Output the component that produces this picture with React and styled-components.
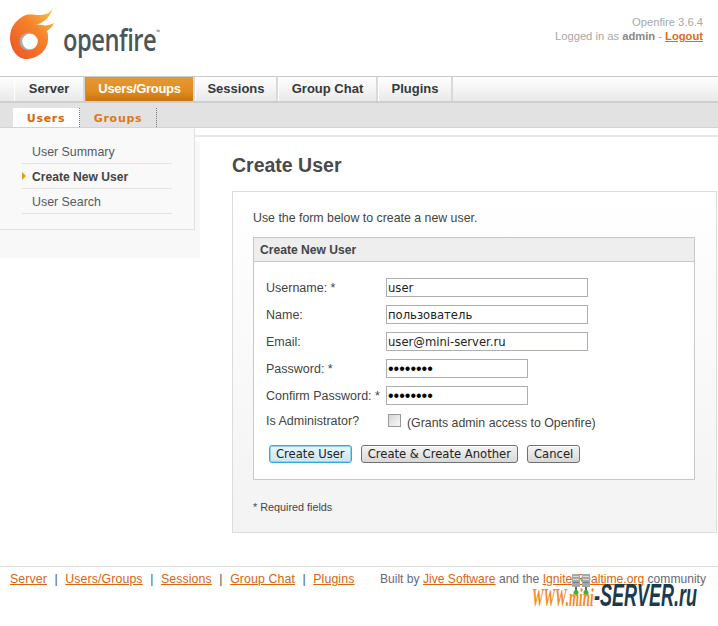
import React from "react"
import styled, { createGlobalStyle } from "styled-components"

const GlobalStyle = createGlobalStyle`
  html, body { margin: 0; padding: 0; background: #fff; }
  body { font-family: "Liberation Sans", Arial, sans-serif; font-size: 12.35px; color: #444; }
`

const mainTabs = [
  { label: "Server", width: 71 },
  { label: "Users/Groups", width: 110, active: true },
  { label: "Sessions", width: 83 },
  { label: "Group Chat", width: 100 },
  { label: "Plugins", width: 75 },
]

const sideItems = [
  { label: "User Summary" },
  { label: "Create New User", active: true },
  { label: "User Search" },
]

const fields = [
  { label: "Username: *", value: "user" },
  { label: "Name:", value: "пользователь" },
  { label: "Email:", value: "user@mini-server.ru" },
  { label: "Password: *", value: "password", type: "password", short: true },
  { label: "Confirm Password: *", value: "password", type: "password", short: true },
]

const footerLinks = ["Server", "Users/Groups", "Sessions", "Group Chat", "Plugins"]

function FlameLogo() {
  return (
    <svg width="46" height="52" viewBox="0 0 46 52">
      <defs>
        <linearGradient id="flame" x1="0.1" y1="0.9" x2="0.95" y2="0">
          <stop offset="0" stopColor="#ee5a26" />
          <stop offset="0.55" stopColor="#f6832a" />
          <stop offset="1" stopColor="#fbc24c" />
        </linearGradient>
      </defs>
      <path
        fill="url(#flame)"
        d="M43 0 C40 5 36 7 30 7 C24 7 21 6 16 7 C8 10 0 18 0 29 C0 42 8 51 16 51 C28 51 38 42 38 31 C38 27 38 25 37 23 C40 21 43 18 44 15 C40 17 36 18 32 17 C28 16.5 26 17 25 17 C32 16 40 10 43 0 Z"
      />
      <circle cx="18.5" cy="33.5" r="9" fill="#a9adaf" />
      <circle cx="20" cy="33.5" r="7.8" fill="#fff" />
    </svg>
  )
}

function ServerIcon() {
  return (
    <svg width="9" height="21" viewBox="0 0 9 21">
      <rect x="0" y="0" width="8" height="13" fill="#a6a8a8" />
      <rect x="1" y="2" width="6" height="1" fill="#d9dada" />
      <rect x="1" y="5" width="6" height="1" fill="#d9dada" />
      <rect x="1" y="8" width="6" height="1" fill="#7d7f7f" />
      <rect x="3" y="13" width="2" height="5" fill="#666" />
      <circle cx="4" cy="18.5" r="2.5" fill="#35b83a" />
    </svg>
  )
}

export default function App() {
  return (
    <Page>
      <GlobalStyle />
      <Header>
        <Logo>
          <FlameLogo />
          <LogoText>openfire<sup>™</sup></LogoText>
        </Logo>
        <UserInfo>
          <div>Openfire 3.6.4</div>
          <div>Logged in as <b>admin</b> - <LogoutLink href="#">Logout</LogoutLink></div>
        </UserInfo>
      </Header>

      <TabBar>
        {mainTabs.map(tab => (
          <MainTab key={tab.label} $width={tab.width} $active={tab.active}>{tab.label}</MainTab>
        ))}
      </TabBar>

      <SubBar>
        <SubTab $active>Users</SubTab>
        <SubTab>Groups</SubTab>
      </SubBar>

      <Main>
        <SideBack>
          <Sidebar>
            {sideItems.map(item => (
              <SideItem key={item.label} $active={item.active}>{item.label}</SideItem>
            ))}
          </Sidebar>
        </SideBack>

        <Content>
          <Title>Create User</Title>
          <FormBox>
            <Intro>Use the form below to create a new user.</Intro>
            <Panel>
              <PanelHead>Create New User</PanelHead>
              <PanelBody>
                {fields.map(field => (
                  <FormRow key={field.label}>
                    <FieldLabel>{field.label}</FieldLabel>
                    <TextInput
                      type={field.type || "text"}
                      defaultValue={field.value}
                      $short={field.short}
                    />
                  </FormRow>
                ))}
                <AdminRow>
                  <FieldLabel>Is Administrator?</FieldLabel>
                  <CheckBox />
                  <AdminNote>(Grants admin access to Openfire)</AdminNote>
                </AdminRow>
                <Buttons>
                  <Button $primary>Create User</Button>
                  <Button>Create &amp; Create Another</Button>
                  <Button>Cancel</Button>
                </Buttons>
              </PanelBody>
            </Panel>
            <Required>* Required fields</Required>
          </FormBox>
        </Content>
      </Main>

      <Footer>
        <FooterLinks>
          {footerLinks.map((link, i) => (
            <React.Fragment key={link}>
              {i > 0 && <Sep>|</Sep>}
              <FooterLink href="#">{link}</FooterLink>
            </React.Fragment>
          ))}
        </FooterLinks>
        <Credits>
          Built by <FooterLink href="#">Jive Software</FooterLink> and the{" "}
          <FooterLink href="#">Ignite Realtime.org</FooterLink> community
        </Credits>
        <Watermark>
          <Servers><ServerIcon /><ServerIcon /></Servers>
          <WaterOrange>WWW.mini</WaterOrange>
          <WaterDark>-SERVER.ru</WaterDark>
        </Watermark>
      </Footer>
    </Page>
  )
}

const Page = styled.div`
  width: 718px;
  height: 626px;
  overflow: hidden;
  position: relative;
  background: #fff;
`

const Header = styled.div`
  height: 76px;
  display: flex;
  justify-content: space-between;
  align-items: flex-start;
  padding: 8px 15px 0 10px;
  box-sizing: border-box;
`

const Logo = styled.div`
  display: flex;
  align-items: flex-start;
  gap: 7px;
`

const LogoText = styled.div`
  font-family: "Open Sans", sans-serif;
  font-size: 30px;
  font-weight: 600;
  color: #4c5559;
  letter-spacing: -0.6px;
  margin-top: 11px;
  transform: scaleX(0.79);
  transform-origin: left;
  sup { font-size: 6px; vertical-align: 17px; line-height: 0; letter-spacing: 0; }
`

const UserInfo = styled.div`
  text-align: right;
  color: #a8a8a8;
  font-size: 11.2px;
  line-height: 14px;
  margin-top: 7px;
  b { color: #888; }
`

const LogoutLink = styled.a`
  color: #e06c10;
  font-weight: bold;
`

const TabBar = styled.div`
  height: 27px;
  box-sizing: border-box;
  display: flex;
  padding-left: 14px;
  border-top: 1px solid #cbcbcb;
  border-bottom: 2px solid #cfcfcf;
  background: linear-gradient(#fff, #e9e9e9);
`

const MainTab = styled.div`
  width: ${p => p.$width}px;
  height: 24px;
  box-sizing: border-box;
  display: flex;
  align-items: center;
  justify-content: center;
  padding-bottom: 2px;
  font-size: 13px;
  font-weight: bold;
  letter-spacing: ${p => (p.$active ? "-0.3px" : "0")};
  border-right: 2px solid #d9d9d9;
  border-left: 1px solid ${p => (p.$active ? "#e08a20" : "#fff")};
  color: ${p => (p.$active ? "#fff" : "#33383c")};
  background: ${p => (p.$active ? "linear-gradient(#e59a35, #e08c20 60%, #c87410)" : "linear-gradient(#fff, #e9e9e9)")};
`

const SubBar = styled.div`
  height: 25px;
  box-sizing: border-box;
  display: flex;
  align-items: flex-end;
  padding-left: 13px;
  background: #e2e2e2;
  border-bottom: 1px solid #d3d3d3;
`

const SubTab = styled.div`
  width: ${p => (p.$active ? 67 : 77)}px;
  height: 19px;
  box-sizing: border-box;
  text-align: center;
  line-height: 21px;
  font-family: "DejaVu Sans", sans-serif;
  font-size: 11px;
  font-weight: bold;
  letter-spacing: 0.7px;
  color: ${p => (p.$active ? "#d8650c" : "#d97a1c")};
  background: ${p => (p.$active ? "#fff" : "transparent")};
  border-right: 1px dotted #777;
`

const Main = styled.div`
  height: 438px;
  display: flex;
  align-items: flex-start;
`

const SideBack = styled.div`
  width: 200px;
  height: 130px;
  flex: none;
  background: linear-gradient(#fff 13px, #f8f8f8 13px);
`

const Sidebar = styled.div`
  width: 195px;
  height: 102px;
  box-sizing: border-box;
  padding: 11px 22px 0 22px;
  background: #f9f9f9;
  border-right: 1px solid #e1e1e1;
  border-bottom: 1px solid #e1e1e1;
`

const SideItem = styled.div`
  height: 25px;
  box-sizing: border-box;
  line-height: 26px;
  padding-left: 10px;
  border-bottom: 1px solid #e3e3e3;
  font-size: ${p => (p.$active ? "12.1px" : "12.4px")};
  font-weight: ${p => (p.$active ? "bold" : "normal")};
  color: ${p => (p.$active ? "#444" : "#555a60")};
  position: relative;
  ${p => p.$active && `
    &::before {
      content: "";
      position: absolute;
      left: 0;
      top: 8px;
      border-left: 4px solid #dfa010;
      border-top: 4px solid transparent;
      border-bottom: 4px solid transparent;
    }
  `}
`

const Content = styled.div`
  flex: 1;
  position: relative;
  margin: 7px 0 0;
  padding: 17px 1px 0 32px;
  height: 404px;
  box-sizing: border-box;
  background: #fff;
  border-top: 2px solid #e8e8e8;
  &::before {
    content: "";
    position: absolute;
    left: -5px;
    top: -2px;
    width: 5px;
    height: 2px;
    background: #e8e8e8;
  }
`

const Title = styled.h1`
  margin: 0 0 14px;
  font-size: 19.5px;
  line-height: 23px;
  font-weight: bold;
  color: #4a4a4a;
`

const FormBox = styled.div`
  height: 342px;
  box-sizing: border-box;
  padding: 0 21px 0 20px;
  border: 1px solid #dcdcdc;
  background: linear-gradient(#fff, #f3f3f3);
`

const Intro = styled.p`
  margin: 0;
  padding-top: 19px;
  height: 45px;
  box-sizing: border-box;
  color: #444;
  line-height: 14px;
`

const Panel = styled.div`
  height: 243px;
  box-sizing: border-box;
  border: 1px solid #c8c8c8;
  background: #fff;
`

const PanelHead = styled.div`
  height: 24px;
  box-sizing: border-box;
  padding-left: 6px;
  line-height: 25px;
  font-size: 12.1px;
  font-weight: bold;
  color: #444;
  background: #eeeeee;
  border-bottom: 1px solid #c8c8c8;
`

const PanelBody = styled.div`
  padding: 16px 0 0 12px;
`

const FormRow = styled.div`
  height: 27px;
  display: flex;
  align-items: flex-start;
`

const FieldLabel = styled.label`
  width: 120px;
  flex: none;
  line-height: 20px;
  font-size: 12.5px;
  color: #444;
`

const TextInput = styled.input`
  width: ${p => (p.$short ? 142 : 202)}px;
  height: 19px;
  box-sizing: border-box;
  padding: 1px 1px 0;
  border: 1px solid #adadb3;
  background: #fff;
  font-family: ${p => (p.type === "password" ? '"Liberation Sans", sans-serif' : '"DejaVu Sans", sans-serif')};
  font-size: ${p => (p.type === "password" ? "16px" : "11.6px")};
  color: ${p => (p.type === "password" ? "#000" : "#222")};
  outline: none;
`

const AdminRow = styled.div`
  display: flex;
  align-items: flex-start;
  height: 34px;
  margin-top: -2px;
`

const CheckBox = styled.span`
  width: 13px;
  height: 13px;
  box-sizing: border-box;
  margin: 3px 6px 0 2px;
  flex: none;
  border: 1px solid #999;
  background: linear-gradient(135deg, #d6d6d6, #f8f8f8);
`

const AdminNote = styled.span`
  line-height: 20px;
  margin-top: 2px;
  color: #444;
`

const Buttons = styled.div`
  display: flex;
  gap: 9px;
  padding-left: 3px;
`

const Button = styled.button`
  height: 18px;
  padding: 0 6px;
  border-radius: 3px;
  font-family: "DejaVu Sans", sans-serif;
  font-size: 11.6px;
  line-height: 14px;
  color: #222;
  white-space: nowrap;
  border: 1px solid ${p => (p.$primary ? "#3aa5d8" : "#707070")};
  box-shadow: ${p => (p.$primary ? "inset 0 0 0 1px #8fd3f2" : "inset 0 1px 0 #fff")};
  background: linear-gradient(${p => (p.$primary ? "#e8f6fd, #c8e6f6" : "#f4f4f4, #d8d8d8")});
`

const Required = styled.div`
  margin-top: 21px;
  font-size: 10.8px;
  color: #444;
`

const Footer = styled.div`
  position: relative;
  height: 60px;
  box-sizing: border-box;
  border-top: 1px solid #dedede;
  display: flex;
  justify-content: space-between;
  padding: 5px 12px 0 10px;
  line-height: 14px;
`

const FooterLinks = styled.div`
  display: flex;
  letter-spacing: 0.1px;
`

const Sep = styled.span`
  margin: 0 7.5px;
  color: #555;
`

const FooterLink = styled.a`
  color: #d9650f;
  text-decoration: underline;
`

const Credits = styled.div`
  font-size: 12.1px;
  color: #666a78;
  white-space: nowrap;
`

const Watermark = styled.div`
  position: absolute;
  left: 532px;
  top: 14px;
  display: flex;
  align-items: baseline;
  white-space: nowrap;
  line-height: 30px;
`

const Servers = styled.div`
  position: absolute;
  left: 40px;
  top: -7px;
  display: flex;
  gap: 1px;
`

const WaterOrange = styled.span`
  font-family: "Liberation Serif", serif;
  font-style: italic;
  font-size: 26px;
  font-weight: bold;
  color: #f58a1f;
  display: inline-block;
  transform: scaleX(0.5);
  transform-origin: left;
  width: 62px;
`

const WaterDark = styled.span`
  font-family: "Liberation Sans", sans-serif;
  font-style: italic;
  font-weight: bold;
  font-size: 31px;
  color: #1c3a4e;
  display: inline-block;
  transform: scaleX(0.58);
  transform-origin: left;
`
